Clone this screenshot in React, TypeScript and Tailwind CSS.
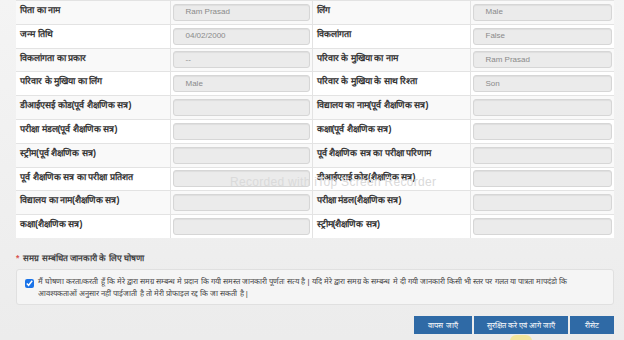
import React from "react";

type Row = [string, string, string, string];

const rows: Row[] = [
  ["पिता का नाम", "Ram Prasad", "लिंग", "Male"],
  ["जन्म तिथि", "04/02/2000", "विकलांगता", "False"],
  ["विकलांगता का प्रकार", "--", "परिवार के मुखिया का नाम", "Ram Prasad"],
  ["परिवार के मुखिया का लिंग", "Male", "परिवार के मुखिया के साथ रिश्ता", "Son"],
  ["डीआईएसई कोड(पूर्व शैक्षणिक सत्र)", "", "विद्यालय का नाम(पूर्व शैक्षणिक सत्र)", ""],
  ["परीक्षा मंडल(पूर्व शैक्षणिक सत्र)", "", "कक्षा(पूर्व शैक्षणिक सत्र)", ""],
  ["स्ट्रीम(पूर्व शैक्षणिक सत्र)", "", "पूर्व शैक्षणिक सत्र का परीक्षा परिणाम", ""],
  ["पूर्व शैक्षणिक सत्र का परीक्षा प्रतिशत", "", "डीआईएसई कोड(शैक्षणिक सत्र)", ""],
  ["विद्यालय का नाम(शैक्षणिक सत्र)", "", "परीक्षा मंडल(शैक्षणिक सत्र)", ""],
  ["कक्षा(शैक्षणिक सत्र)", "", "स्ट्रीम(शैक्षणिक सत्र)", ""],
];

function Field({ value }: { value: string }) {
  return (
    <div className="flex h-[17px] items-center rounded-[3px] border border-[#d6d6d6] bg-[#ebebeb] px-3 text-[8px] text-[#8a8a8a] shadow-[inset_0_1px_1px_rgba(0,0,0,0.06)]">
      {value}
    </div>
  );
}

export default function App() {
  return (
    <div className="relative h-[340px] w-[624px] overflow-hidden bg-gradient-to-b from-[#f4f4f4] to-[#ececec] font-['Liberation_Sans',sans-serif]">
      <div className="ml-4 mr-[10px]">
        <table className="w-full border-collapse bg-white">
          <tbody>
            {rows.map((r, i) => (
              <tr
                key={i}
                className={`h-[23.8px] border-t border-[#e3e3e3] ${
                  i % 2 === 0 ? "bg-[#f9f9f9]" : "bg-white"
                }`}
              >
                <td className="w-[154px] border-r border-[#e3e3e3] px-1 pt-[2px] align-top text-[9px] font-bold leading-[14px] text-[#333]">
                  {r[0]}
                </td>
                <td className="w-[142px] border-r border-[#e3e3e3] px-[2px] align-middle">
                  <Field value={r[1]} />
                </td>
                <td className="w-[158px] border-r border-[#e3e3e3] px-1 pt-[2px] align-top text-[9px] font-bold leading-[14px] text-[#333]">
                  {r[2]}
                </td>
                <td className="px-[2px] align-middle">
                  <Field value={r[3]} />
                </td>
              </tr>
            ))}
          </tbody>
        </table>

        <p className="mt-[13px] text-[8.5px] font-bold leading-[14px] text-[#444]">
          <span className="mr-1 text-[#d9534f]">*</span>
          समग्र सम्बंधित जानकारी के लिए घोषणा
        </p>

        <div className="mt-[4px] flex h-[36px] items-start gap-[4px] rounded-[3px] border border-[#e0e0e0] bg-[#f5f5f5] px-[8px] pt-[6px]">
          <input
            type="checkbox"
            defaultChecked
            className="mt-[3px] h-[9px] w-[9px] shrink-0 accent-[#1a73e8]"
          />
          <p className="whitespace-nowrap text-[7.7px] leading-[12px] text-[#444]">
            मैं घोषणा करता/करती हूँ कि मेरे द्वारा समग्र सम्बन्ध मे प्रदान कि गयी समस्त जानकारी पूर्णतः सत्य है | यदि मेरे द्वारा समग्र के सम्बन्ध मे दी गयी जानकारी किसी भी स्तर पर गलत या पात्रता मापदंडो कि
            <br />
            आवश्यकताओं अनुसार नहीं पाईजाती है तो मेरी प्रोफाइल रद्द कि जा सकती है |
          </p>
        </div>

        <div className="mt-[11px] flex justify-end gap-[2px]">
          <button className="h-[18px] w-[58px] bg-[#2f6aa6] text-[7.5px] text-white">
            वापस जाएँ
          </button>
          <button className="h-[18px] w-[94px] bg-[#2f6aa6] text-[7.5px] text-white">
            सुरक्षित करे एवं आगे जाएँ
          </button>
          <button className="h-[18px] w-[44px] bg-[#2f6aa6] text-[7.5px] text-white">
            रीसेट
          </button>
        </div>
      </div>

      <div className="pointer-events-none absolute left-[230px] top-[173px] text-[12px] tracking-wide text-[#dadada]">
        Recorded with iTop Screen Recorder
      </div>
      <div className="pointer-events-none absolute left-[510px] top-[335px] h-[12px] w-[22px] rounded-full bg-[#f5e27a]/70" />
    </div>
  );
}
